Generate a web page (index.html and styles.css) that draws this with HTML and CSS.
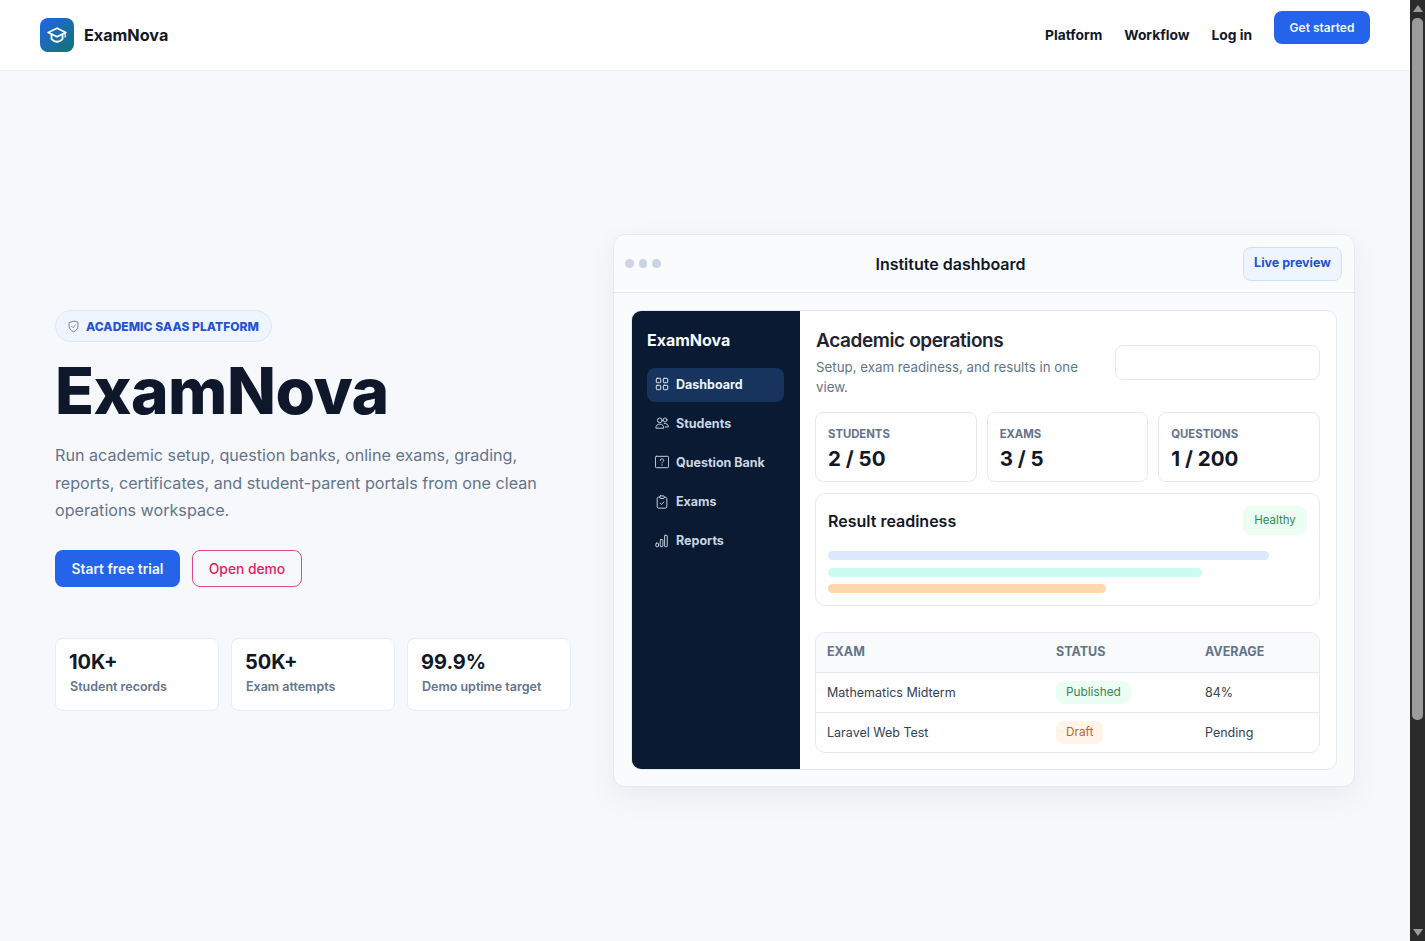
FILE: index.html
```html
<!DOCTYPE html>
<html lang="en">
<head>
<meta charset="utf-8">
<title>ExamNova</title>
<link rel="stylesheet" href="styles.css">
</head>
<body>
<div class="page">
  <header class="topbar">
    <a class="brand">
      <span class="brand-mark">
        <svg viewBox="0 0 16 16" width="20" height="20" fill="none" stroke="#fff" stroke-width="1.500" stroke-linejoin="round" stroke-linecap="round"><path d="M8 2.600 1 6l7 3.400L15 6z"/><path d="M3.600 7.600v3.600C5 13 6.500 13.400 8 13.400s3-.4 4.400-2.200V7.600"/><path d="M14.500 6v3.500" stroke-width="1"/></svg>
      </span>
      <span class="brand-name">ExamNova</span>
    </a>
    <nav class="topnav">
      <a>Platform</a>
      <a>Workflow</a>
      <a>Log in</a>
      <a class="cta">Get started</a>
    </nav>
  </header>
  <main class="hero">
    <section class="intro">
      <div class="badge">
        <svg viewBox="0 0 16 16" width="13" height="13" fill="none" stroke="#64748b" stroke-width="1.100" stroke-linejoin="round" stroke-linecap="round"><path d="M8 1.500 2.500 3.200v4.300c0 3.200 2.400 5.600 5.500 7 3.100-1.400 5.500-3.800 5.500-7V3.200z"/><path d="m5.700 7.800 1.600 1.600 3-3"/></svg>
        <span>Academic SaaS Platform</span>
      </div>
      <h1>ExamNova</h1>
      <p class="lead">Run academic setup, question banks, online exams, grading, reports, certificates, and student-parent portals from one clean operations workspace.</p>
      <div class="actions">
        <a class="btn btn-primary">Start free trial</a>
        <a class="btn btn-outline">Open demo</a>
      </div>
      <div class="metrics">
        <div class="metric"><strong>10K+</strong><span>Student records</span></div>
        <div class="metric"><strong>50K+</strong><span>Exam attempts</span></div>
        <div class="metric"><strong>99.9%</strong><span>Demo uptime target</span></div>
      </div>
    </section>
    <section class="panel">
      <div class="panel-head">
        <div class="dots"><i></i><i></i><i></i></div>
        <div class="panel-title">Institute dashboard</div>
        <a class="live">Live preview</a>
      </div>
      <div class="panel-body">
        <div class="app">
          <aside class="side">
            <div class="side-brand">ExamNova</div>
            <a class="side-item active">
              <svg class="ico" viewBox="0 0 16 16"><rect x="1.500" y="1.500" width="5" height="5" rx="1"/><rect x="9.500" y="1.500" width="5" height="5" rx="1"/><rect x="1.500" y="9.500" width="5" height="5" rx="1"/><rect x="9.500" y="9.500" width="5" height="5" rx="1"/></svg>
              Dashboard
            </a>
            <a class="side-item">
              <svg class="ico" viewBox="0 0 16 16"><circle cx="5.500" cy="5" r="2.700"/><circle cx="11.500" cy="4.500" r="2.200"/><path d="M1 13.500c0-2.800 1.800-4.200 4.500-4.200S10 10.700 10 13.500z"/><path d="M10.500 8.500c2.800-.3 4.700 1.300 4.700 4h-3.500"/></svg>
              Students
            </a>
            <a class="side-item">
              <svg class="ico" viewBox="0 0 16 16"><rect x=".5" y="1.500" width="15" height="13" rx="1"/><path d="M6 6.200c0-1.200.9-1.800 2-1.800s2 .6 2 1.700c0 1.500-2 1.500-2 3"/><path d="M8 11.200v.6"/></svg>
              Question Bank
            </a>
            <a class="side-item">
              <svg class="ico" viewBox="0 0 16 16"><path d="M5.500 2.500H4a1.500 1.500 0 0 0-1.500 1.500v9.500A1.500 1.500 0 0 0 4 15h8a1.500 1.500 0 0 0 1.500-1.500V4A1.500 1.500 0 0 0 12 2.500h-1.500"/><rect x="5.500" y="1" width="5" height="3" rx=".8"/><path d="m5.800 9.300 1.500 1.500 3-3"/></svg>
              Exams
            </a>
            <a class="side-item">
              <svg class="ico" viewBox="0 0 16 16"><rect x="1" y="10.500" width="3" height="4" rx=".6"/><rect x="6" y="6.500" width="3" height="8" rx=".6"/><rect x="11" y="1.500" width="3" height="13" rx=".6"/></svg>
              Reports
            </a>
          </aside>
          <div class="content">
            <div class="content-head">
              <div class="content-text">
                <h2>Academic operations</h2>
                <p>Setup, exam readiness, and results in one view.</p>
              </div>
              <div class="search"></div>
            </div>
            <div class="counts">
              <div class="count"><span>Students</span><strong>2 / 50</strong></div>
              <div class="count"><span>Exams</span><strong>3 / 5</strong></div>
              <div class="count"><span>Questions</span><strong>1 / 200</strong></div>
            </div>
            <div class="ready">
              <div class="ready-head">
                <h3>Result readiness</h3>
                <span class="pill pill-green pill-lg">Healthy</span>
              </div>
              <div class="bars">
                <div class="bar bar-blue"></div>
                <div class="bar bar-teal"></div>
                <div class="bar bar-orange"></div>
              </div>
            </div>
            <div class="table-wrap">
              <table class="exam-table">
                <thead>
                  <tr><th class="col-exam">Exam</th><th class="col-status">Status</th><th>Average</th></tr>
                </thead>
                <tbody>
                  <tr><td>Mathematics Midterm</td><td><span class="pill pill-green">Published</span></td><td>84%</td></tr>
                  <tr><td>Laravel Web Test</td><td><span class="pill pill-orange">Draft</span></td><td>Pending</td></tr>
                </tbody>
              </table>
            </div>
          </div>
        </div>
      </div>
    </section>
  </main>
</div>
<div class="scrollbar" aria-hidden="true">
  <span class="arrow arrow-up"></span>
  <div class="track"><div class="thumb"></div></div>
  <span class="arrow arrow-down"></span>
</div>
</body>
</html>
```
FILE: styles.css
```css
* { box-sizing: border-box; }
html, body { height: 100%; }
body {
  margin: 0;
  display: flex;
  overflow: hidden;
  background: #f6f8fc;
  color: #0f172a;
  font-family: Inter, "Liberation Sans", sans-serif;
}
h1, h2, h3, p { margin: 0; }

.page { flex: 1; min-width: 0; }

.topbar {
  height: 71px;
  background: #fff;
  border-bottom: 1px solid #e9edf4;
  padding: 0 40px;
  display: flex;
  justify-content: space-between;
  align-items: flex-start;
}
.brand { display: flex; align-items: center; gap: 10px; margin-top: 18px; }
.brand-mark {
  width: 34px;
  height: 34px;
  border-radius: 8px;
  background: linear-gradient(135deg, #2563eb, #0f766e);
  display: flex;
  align-items: center;
  justify-content: center;
}
.brand-name { font-size: 16.200px; font-weight: 700; color: #111827; }
.topnav { display: flex; align-items: flex-start; gap: 22px; font-size: 13.800px; font-weight: 700; color: #111827; }
.topnav a { margin-top: 26px; line-height: 18px; }
.topnav .cta {
  margin: 11px 0 0;
  width: 96px;
  height: 33px;
  border-radius: 8px;
  background: #2563eb;
  color: #eff6ff;
  font-size: 12px;
  font-weight: 600;
  text-align: center;
  line-height: 33px;
}

.hero {
  width: 1300px;
  margin: 0 auto;
  padding-top: 163px;
  display: grid;
  grid-template-columns: 516px 742px;
  gap: 42px;
  align-items: center;
}

.badge {
  display: inline-flex;
  align-items: center;
  gap: 6px;
  height: 32px;
  padding: 0 12px 0 11px;
  border: 1px solid #dbe7fb;
  border-radius: 999px;
  background: #eff5ff;
  color: #2352d6;
  font-size: 12px;
  font-weight: 800;
  letter-spacing: .05px;
  text-transform: uppercase;
}
.intro h1 {
  margin-top: 13px;
  font-size: 64px;
  font-weight: 800;
  line-height: 72px;
  letter-spacing: -.5px;
  color: #0f172a;
}
.lead { margin-top: 15px; font-size: 16.150px; line-height: 27.400px; color: #64748b; }
.actions { margin-top: 25px; display: flex; gap: 12px; }
.btn {
  height: 37px;
  border-radius: 8px;
  font-size: 13.800px;
  line-height: 36px;
  text-align: center;
  border: 1px solid transparent;
}
.btn-primary { width: 125px; background: #2563eb; color: #f1f5ff; font-weight: 600; }
.btn-outline { width: 110px; border-color: #dd4d7f; color: #e11d62; font-weight: 500; }
.metrics { margin-top: 51px; display: grid; grid-template-columns: repeat(3, 164px); gap: 12px; }
.metric {
  height: 73px;
  padding: 12px 13px;
  background: #fff;
  border: 1px solid #e8edf5;
  border-radius: 8px;
}
.metric strong { display: block; font-size: 20px; font-weight: 700; line-height: 23px; color: #111827; }
.metric span { display: block; margin-top: 3px; padding-left: 1px; font-size: 12.500px; font-weight: 600; line-height: 20px; color: #64748b; }

.panel {
  height: 553px;
  background: #f9fbfd;
  border: 1px solid #e5eaf2;
  border-radius: 12px;
  box-shadow: 0 10px 30px rgba(15, 23, 42, .06);
}
.panel-head {
  height: 58px;
  padding: 0 12px 0 11px;
  border-bottom: 1px solid #e2e8f0;
  display: flex;
  align-items: center;
  justify-content: space-between;
}
.dots { display: flex; gap: 5px; width: 36px; margin-right: -3px; }
.dots i { width: 8.500px; height: 8.500px; border-radius: 50%; background: #cbd5e1; }
.panel-title { font-size: 16px; font-weight: 600; color: #111827; }
.live {
  width: 99px;
  height: 34px;
  border: 1px solid #cfe0fa;
  border-radius: 8px;
  background: #eff5ff;
  color: #2352d6;
  font-size: 12.500px;
  font-weight: 700;
  line-height: 30px;
  text-align: center;
}
.panel-body { padding: 17px 17px 0 17px; }
.app {
  height: 460px;
  display: flex;
  background: #fff;
  border: 1px solid #e5eaf2;
  border-radius: 10px;
  overflow: hidden;
}
.side { width: 168px; flex: none; background: #0a1a33; padding: 19px 16px 0 15px; }
.side-brand { font-size: 16px; font-weight: 700; color: #f8fafc; line-height: 20px; margin-bottom: 18px; }
.side-item {
  display: flex;
  align-items: center;
  gap: 7px;
  height: 34px;
  padding: 0 0 2px 8px;
  margin-bottom: 5.200px;
  border-radius: 8px;
  color: #cbd5e1;
  font-size: 12.500px;
  font-weight: 700;
}
.side-item.active { background: #17345f; color: #f1f5f9; }
.ico { width: 14px; height: 14px; fill: none; stroke: currentColor; stroke-width: 1.100; stroke-linecap: round; stroke-linejoin: round; flex: none; }

.content { flex: 1; min-width: 0; padding: 17px 16px 0 15px; }
.content-head { display: flex; justify-content: space-between; align-items: center; }
.content-text { width: 276px; padding-left: 1px; }
.content-text h2 { font-size: 19px; font-weight: 600; line-height: 26px; letter-spacing: -.4px; color: #1f2430; }
.content-text p { margin-top: 3px; font-size: 13.300px; line-height: 20px; color: #64748b; }
.search { width: 205px; height: 35px; margin-top: -1px; background: #fff; border: 1px solid #e5eaf2; border-radius: 8px; }

.counts { margin-top: 15px; display: grid; grid-template-columns: repeat(3, 1fr); gap: 10px; }
.count { height: 70px; padding: 12px; border: 1px solid #e5eaf2; border-radius: 8px; background: #fff; }
.count span { display: block; font-size: 11.300px; font-weight: 700; line-height: 18px; text-transform: uppercase; color: #64748b; }
.count strong { display: block; margin-top: 2px; font-size: 20.500px; font-weight: 700; line-height: 28px; color: #111827; }

.ready { margin-top: 11px; height: 113px; padding: 12px; border: 1px solid #e5eaf2; border-radius: 10px; }
.ready-head { display: flex; justify-content: space-between; align-items: center; height: 29px; }
.ready-head h3 { font-size: 16px; font-weight: 600; color: #111827; }
.bars { margin-top: 16px; display: grid; gap: 7.500px; }
.bar { height: 9px; border-radius: 999px; }
.bar-blue { width: 92%; background: #dbe9fc; }
.bar-teal { width: 78%; background: #ccfbef; }
.bar-orange { width: 58%; background: #fed7aa; }

.pill { display: inline-block; height: 23px; padding: 0 10px; border-radius: 8px; font-size: 11.800px; line-height: 22px; font-weight: 400; }
.pill-lg { height: 29px; width: 64px; text-align: center; padding: 0; line-height: 29px; font-size: 11.500px; }
.pill-green { background: #ecfdf3; color: #2f8a58; }
.pill-orange { background: #fff4e8; color: #b76a36; }

.table-wrap { margin-top: 26px; border: 1px solid #e5eaf2; border-radius: 10px; overflow: hidden; }
.exam-table { width: 100%; border-collapse: collapse; table-layout: fixed; font-size: 12.500px; color: #334155; }
.exam-table th, .exam-table td { padding: 0 0 0 11px; text-align: left; }
.exam-table th { height: 39px; padding-bottom: 2px; background: #f8fafc; font-size: 12.500px; font-weight: 700; text-transform: uppercase; color: #64748b; }
.exam-table td { height: 40px; border-top: 1px solid #e5eaf2; font-weight: 400; }
.col-exam { width: 229px; }
.col-status { width: 149px; }

.scrollbar {
  width: 15px;
  flex: none;
  height: 941px;
  background: #2b2b2b;
  display: flex;
  flex-direction: column;
  align-items: center;
}
.track { flex: 1; width: 100%; padding-top: 6px; }
.thumb { width: 11px; height: 702px; margin: 0 auto; background: #9b9b9b; border-radius: 5px; }
.arrow { flex: none; width: 0; height: 0; border-left: 5px solid transparent; border-right: 5px solid transparent; }
.arrow-up { margin-top: 5px; border-bottom: 7px solid #9b9b9b; }
.arrow-down { margin-bottom: 5px; border-top: 7px solid #9b9b9b; }
```
